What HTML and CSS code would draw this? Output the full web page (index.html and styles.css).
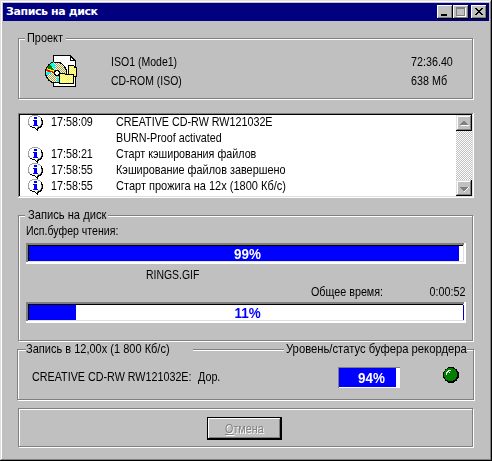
FILE: index.html
```html
<!DOCTYPE html>
<html lang="ru">
<head>
<meta charset="utf-8">
<title>Запись на диск</title>
<link rel="stylesheet" href="styles.css">
</head>
<body>
<svg class="defs" width="0" height="0" aria-hidden="true">
  <symbol id="info" viewBox="0 0 16 16" shape-rendering="crispEdges">
    <path fill="#a0a0a0" d="M5 0h6v1h2v1h1v1h1v2h1v5h-1v2h-1v1h-2v1h-1v2h-1v-1h-1v-1h-1v-1h-3v-1h-2v-1h-1v-1h-1v-6h1v-2h1v-1h2z"/>
    <path fill="#000" d="M14 3h1v2h1v5h-1v2h-1v1h-2v1h-1v2h-1v-1h-1v-1h-1v-1h-3v-1h-2v-1h2v1h4v1h2v-1h2v-1h1v-2h1z"/>
    <path fill="#fff" d="M5 1h6v1h2v1h1v7h-1v1h-2v1h-1v2h-1v-1h-1v-1h-3v-1h-2v-2h-1v-5h1v-2h2z"/>
    <path fill="#00f" d="M7 2h3v2h-3zM6 5h4v5h1v1h-5v-1h1v-4h-1z"/>
  </symbol>
</svg>
<div class="window">
  <header class="titlebar">
    <span class="title">Запись на диск</span>
    <button class="tb"><svg width="12" height="10" shape-rendering="crispEdges"><path d="M2 7h6v2h-6z"/></svg></button>
    <button class="tb"><svg width="12" height="10" shape-rendering="crispEdges"><path fill="#fff" d="M2 1h9v9h-9z"/><path fill="#808080" d="M1 0h9v9h-9z"/><path fill="#c0c0c0" d="M2 2h7v6h-7z"/></svg></button>
    <button class="tb close"><svg width="12" height="10" shape-rendering="crispEdges"><path d="M2 1h2v1h1v1h2v-1h1v-1h2v1h-1v1h-1v1h-1v1h1v1h1v1h1v1h-2v-1h-1v-1h-2v1h-1v1h-2v-1h1v-1h1v-1h1v-1h-1v-1h-1v-1h-1z"/></svg></button>
  </header>
  <main>
    <section class="group project">
      <h2 class="legend"><span class="t-project">Проект</span></h2>
      <svg class="cd" width="32" height="32" viewBox="0 0 32 32" shape-rendering="crispEdges">
        <defs><pattern id="dot" width="2" height="2" patternUnits="userSpaceOnUse"><path fill="#fff" d="M0 0h2v2h-2z"/><path fill="#ff0" d="M0 0h1v1h-1zM1 1h1v1h-1z"/></pattern>
        <pattern id="disc" width="2" height="2" patternUnits="userSpaceOnUse"><path fill="#ffffe0" d="M0 0h2v2h-2z"/><path fill="#a0a050" d="M0 0h1v1h-1zM1 1h1v1h-1z"/></pattern></defs>
        <path fill="#fff" d="M8 0h17l6 6v26h-23z"/>
        <path d="M8 0h17v1h-16v30h21v-25h-5v-6h1v1h1v1h1v1h1v1h1v1h1v27h-23z"/>
        <path fill="#fff" d="M26 3h1v1h1v1h-2z"/>
        <path d="M23 10h6v1h2v1h1v10h-9z"/><path fill="url(#dot)" d="M24 11h5v2h2v8h-7z"/>
        <circle cx="11" cy="17.500" r="10.500" fill="url(#disc)" stroke="#000"/>
        <path fill="#0ff" d="M5 9l4-2 2 9zM12 20l3 7h-3z"/><path fill="#008000" d="M2 13l3-4 5 7z"/><path fill="#ff0" d="M2 13l8 3-1 1-7-3z"/><path fill="#f00" d="M1 14l8 3v1l-8-2z"/><path fill="#0ff" d="M1 17l8 1-8 2z"/>
        <path d="M10 15h4v1h1v4h-1v1h-4v-1h-1v-4h1z"/><path fill="#fff" d="M11 16h2v1h1v2h-1v1h-2v-1h-1v-2h1z"/>
        <path d="M14 18h6v1h9v10h-15z"/><path fill="url(#dot)" d="M15 19h5v1h8v8h-13z"/>
      </svg>
      <dl class="facts">
        <dt><span class="t-iso">ISO1 (Mode1)</span></dt><dd><span class="t-len">72:36.40</span></dd>
        <dt><span class="t-rom">CD-ROM (ISO)</span></dt><dd><span class="t-size">638 Мб</span></dd>
      </dl>
    </section>
    <section class="log">
      <ul class="rows">
        <li><svg><use href="#info"/></svg><time>17:58:09</time><span class="t-l1">CREATIVE CD-RW RW121032E</span></li>
        <li><i></i><time></time><span class="t-l2">BURN-Proof activated</span></li>
        <li><svg><use href="#info"/></svg><time>17:58:21</time><span class="t-l3">Старт кэширования файлов</span></li>
        <li><svg><use href="#info"/></svg><time>17:58:55</time><span class="t-l4">Кэширование файлов завершено</span></li>
        <li><svg><use href="#info"/></svg><time>17:58:55</time><span class="t-l5">Старт прожига на 12x (1800 Кб/с)</span></li>
      </ul>
      <div class="scroll">
        <button class="sb"><svg width="12" height="12" shape-rendering="crispEdges"><path fill="#fff" d="M3 8h8v1h-8z"/><path fill="#808080" d="M5 4h2v1h1v1h1v1h1v1h-8v-1h1v-1h1v-1h1z"/></svg></button>
        <button class="sb"><svg width="12" height="12" shape-rendering="crispEdges"><path fill="#fff" d="M10 5h1v1h-1v1h-1v1h-1v1h-1v1h-1v-2z"/><path fill="#808080" d="M2 5h8v1h-1v1h-1v1h-1v1h-2v-1h-1v-1h-1v-1h-1z"/></svg></button>
      </div>
    </section>
    <section class="group burn">
      <h2 class="legend"><span class="t-burn">Запись на диск</span></h2>
      <p class="buffer"><span class="t-buf">Исп.буфер чтения:</span></p>
      <div class="bar"><div class="fill" style="width:430px"></div><b>99%</b></div>
      <p class="file"><span class="t-file">RINGS.GIF</span></p>
      <p class="total"><span class="t-total">Общее время:</span><span class="t-time">0:00:52</span></p>
      <div class="bar low"><div class="fill" style="width:47px"></div><b>11%</b></div>
    </section>
    <section class="group recorder">
      <h2 class="legend"><span class="t-speed">Запись в 12,00x (1 800 Кб/с)</span></h2>
      <h2 class="legend right"><span class="t-level">Уровень/статус буфера рекордера</span></h2>
      <p class="device"><span class="t-dev">CREATIVE CD-RW RW121032E:</span><span class="t-dor">Дор.</span></p>
      <div class="level"><div class="fill" style="width:57px"></div><b>94%</b></div>
      <svg class="led" width="16" height="16" viewBox="0 0 16 16" shape-rendering="crispEdges"><circle cx="8" cy="8" r="8"/><circle cx="7.500" cy="7.500" r="6.700" fill="#008000"/><path fill="#fff" d="M5 3h3v1h-3zM4 4h2v1h-1v1h-1zM3 5h1v3h-1zM6 5h1v1h-1z"/></svg>
    </section>
    <section class="group actions">
      <button class="cancel"><span class="t-cancel"><u>О</u>тмена</span></button>
    </section>
  </main>
</div>
</body>
</html>
```

FILE: styles.css
```css
* { box-sizing: border-box; margin: 0; padding: 0; }
body { width: 492px; height: 461px; overflow: hidden; background: #c0c0c0; color: #000; font: 13px/14px "Liberation Sans", Arial, sans-serif; }
.defs { position: absolute; }
span, b, time { white-space: nowrap; }
h2 { font: inherit; }
ul { list-style: none; }
button { font: inherit; border: 0; border-radius: 0; background: #c0c0c0; }

/* Narrow bitmap-style lettering */
span[class^="t-"], time { display: inline-block; transform: scaleX(.827); transform-origin: 0 50%; justify-self: start; }
.legend span.t-project { transform: scaleX(.84); }
dt span.t-iso { transform: scaleX(.81); }
dt span.t-rom, .file span.t-file { transform: scaleX(.803); }
li span.t-l4 { transform: scaleX(.836); }
li span.t-l5, .legend span.t-speed { transform: scaleX(.848); }
.legend span.t-burn { transform: scaleX(.858); }
.buffer span.t-buf { transform: scaleX(.812); }
.total span.t-time { transform-origin: 100% 50%; }
.legend span.t-level { transform: scaleX(.866); transform-origin: 100% 50%; }
.cancel span.t-cancel { transform-origin: 50% 50%; }

.window { width: 492px; height: 461px; padding: 3px; background: #c0c0c0; box-shadow: inset -1px -1px #000, inset 1px 1px #dfdfdf, inset -2px -2px #808080, inset 2px 2px #fff; }
.titlebar { display: flex; align-items: center; height: 18px; padding: 0 2px 0 3px; background: #000080; color: #fff; }
.title { flex: 1; font: bold 11px/18px "DejaVu Sans", sans-serif; letter-spacing: -0.4px; }
.tb { width: 16px; height: 14px; padding: 2px; line-height: 0; box-shadow: inset -1px -1px #000, inset 1px 1px #fff, inset -2px -2px #808080; }
.tb svg { display: block; }
.close { margin-left: 2px; }

main { display: flex; flex-direction: column; padding: 17px 15px 0; }
.group { position: relative; width: 455px; border: 1px solid #808080; box-shadow: 1px 1px #fff, inset 1px 1px #fff; }
.legend { position: absolute; left: 6px; top: -8px; height: 15px; padding: 0 2px; background: #c0c0c0; }

.project { display: flex; height: 61px; padding: 13px 0 0 26px; }
.project .legend { width: 41px; }
.cd { margin-top: 3px; }
.facts { display: grid; grid-template-columns: 300px auto; grid-auto-rows: 19px; align-content: start; margin: 3px 0 0 34px; }

.log { display: flex; width: 456px; height: 85px; margin-top: 14px; padding: 2px; background: #fff; box-shadow: inset -1px -1px #fff, inset 1px 1px #808080, inset -2px -2px #dfdfdf, inset 2px 2px #000; }
.rows { flex: 1; }
.rows li { display: grid; grid-template-columns: 24px 65px 1fr; height: 16px; padding-left: 7px; }
.rows svg { width: 16px; height: 16px; }
.scroll { display: flex; flex-direction: column; justify-content: space-between; width: 16px; background: repeating-conic-gradient(#fff 0 25%, #c0c0c0 0 50%) 0 0 / 2px 2px; }
.sb { width: 16px; height: 16px; padding: 2px; box-shadow: inset -1px -1px #000, inset 1px 1px #dfdfdf, inset -2px -2px #808080, inset 2px 2px #fff; }
.sb svg { display: block; }

.burn { height: 126px; margin-top: 17px; padding: 8px 7px 0; }
.burn .legend { width: 83px; padding-left: 3px; }
.bar { position: relative; width: 440px; height: 21px; padding: 3px 2px 2px 3px; background: #fff; box-shadow: inset -2px -2px #fff, inset 2px 2px #808080, inset -3px -3px #dfdfdf, inset 3px 3px #000; }
.fill { height: 100%; background: #00f; }
.bar .fill { height: 15px; }
.low::after { content: ""; position: absolute; right: 2px; top: 3px; width: 1px; height: 15px; background: #0000c0; }
b { position: absolute; left: 3px; right: 0; top: 3px; color: #fff; text-align: center; font: bold 14px/16px "Liberation Sans", sans-serif; transform: scaleX(.96); }
.low b { color: #00f; }
.buffer { height: 19px; }
.file { height: 20px; padding: 4px 0 0 120px; }
.total { display: flex; justify-content: space-between; height: 18px; padding: 1px 0 0 285px; }

.recorder { display: grid; grid-template-columns: 306px 105px 16px; align-items: start; width: 457px; height: 51px; margin: 8px 0 0 -1px; padding: 17px 0 0 14px; }
.recorder .legend { left: 8px; width: 167px; padding: 0; }
.recorder .legend.right { display: flex; justify-content: flex-end; left: auto; right: 6px; width: 183px; }
.device { display: flex; padding-top: 3px; }
.t-dor { margin-left: -27px; }
.level { position: relative; width: 62px; height: 21px; padding: 1px; background: #fff; box-shadow: inset 1px 1px #808080; }
.level b { left: 5px; }

.actions { display: flex; height: 39px; margin-top: 8px; padding: 8px 0 0 188px; }
.cancel { width: 75px; height: 23px; color: #808080; text-shadow: 1px 1px #fff; box-shadow: inset 1px 1px #000, inset -2px -2px #000, inset 2px 2px #fff, inset -3px -3px #808080; }
```
